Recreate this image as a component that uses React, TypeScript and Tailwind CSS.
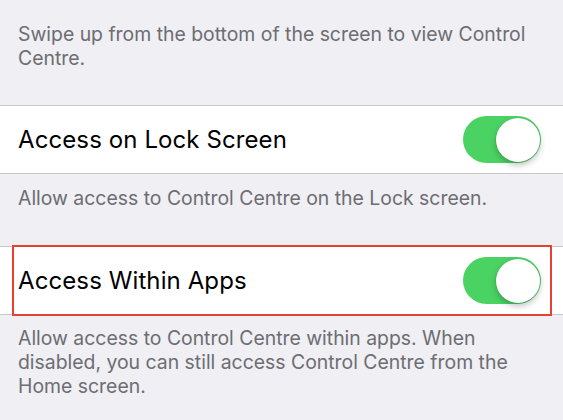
import React from "react";

const Toggle = () => (
  <div className="relative w-[78px] h-[47px] rounded-full bg-[#4ad363] shrink-0">
    <div className="absolute right-[1.5px] top-[1.5px] w-[44px] h-[44px] rounded-full bg-white shadow-[0_3px_6px_rgba(0,0,0,0.25),0_0_0_0.5px_rgba(0,0,0,0.08)]" />
  </div>
);

const Row = ({ label, highlight }: { label: string; highlight?: boolean }) => (
  <div className="relative bg-white border-y border-[#c8c7cc] h-[69px] flex items-center justify-between pl-[18px] pr-[22px]">
    <span className="text-[24px] text-black tracking-[0.1px]">{label}</span>
    <Toggle />
    {highlight && (
      <div className="absolute left-[12px] right-[11px] top-[-2px] bottom-[-2px] border-2 border-[#e5422f] pointer-events-none" />
    )}
  </div>
);

const Footer = ({ children, className }: { children: React.ReactNode; className?: string }) => (
  <p className={`px-[18px] pr-[26px] text-[19.4px] leading-[24px] text-[#6d6d72] ${className ?? ""}`}>
    {children}
  </p>
);

export default function App() {
  return (
    <div className="w-[563px] h-[420px] overflow-hidden bg-[#efeff4] font-['Inter','Noto_Sans',sans-serif]">
      <Footer className="pt-[22px] pb-[35px]">
        Swipe up from the bottom of the screen to view Control Centre.
      </Footer>
      <Row label="Access on Lock Screen" />
      <Footer className="pt-[12px] pb-[36px]">
        Allow access to Control Centre on the Lock screen.
      </Footer>
      <Row label="Access Within Apps" highlight />
      <Footer className="pt-[11px] leading-[23px]">
        Allow access to Control Centre within apps. When disabled, you can still access Control Centre from the Home screen.
      </Footer>
    </div>
  );
}
